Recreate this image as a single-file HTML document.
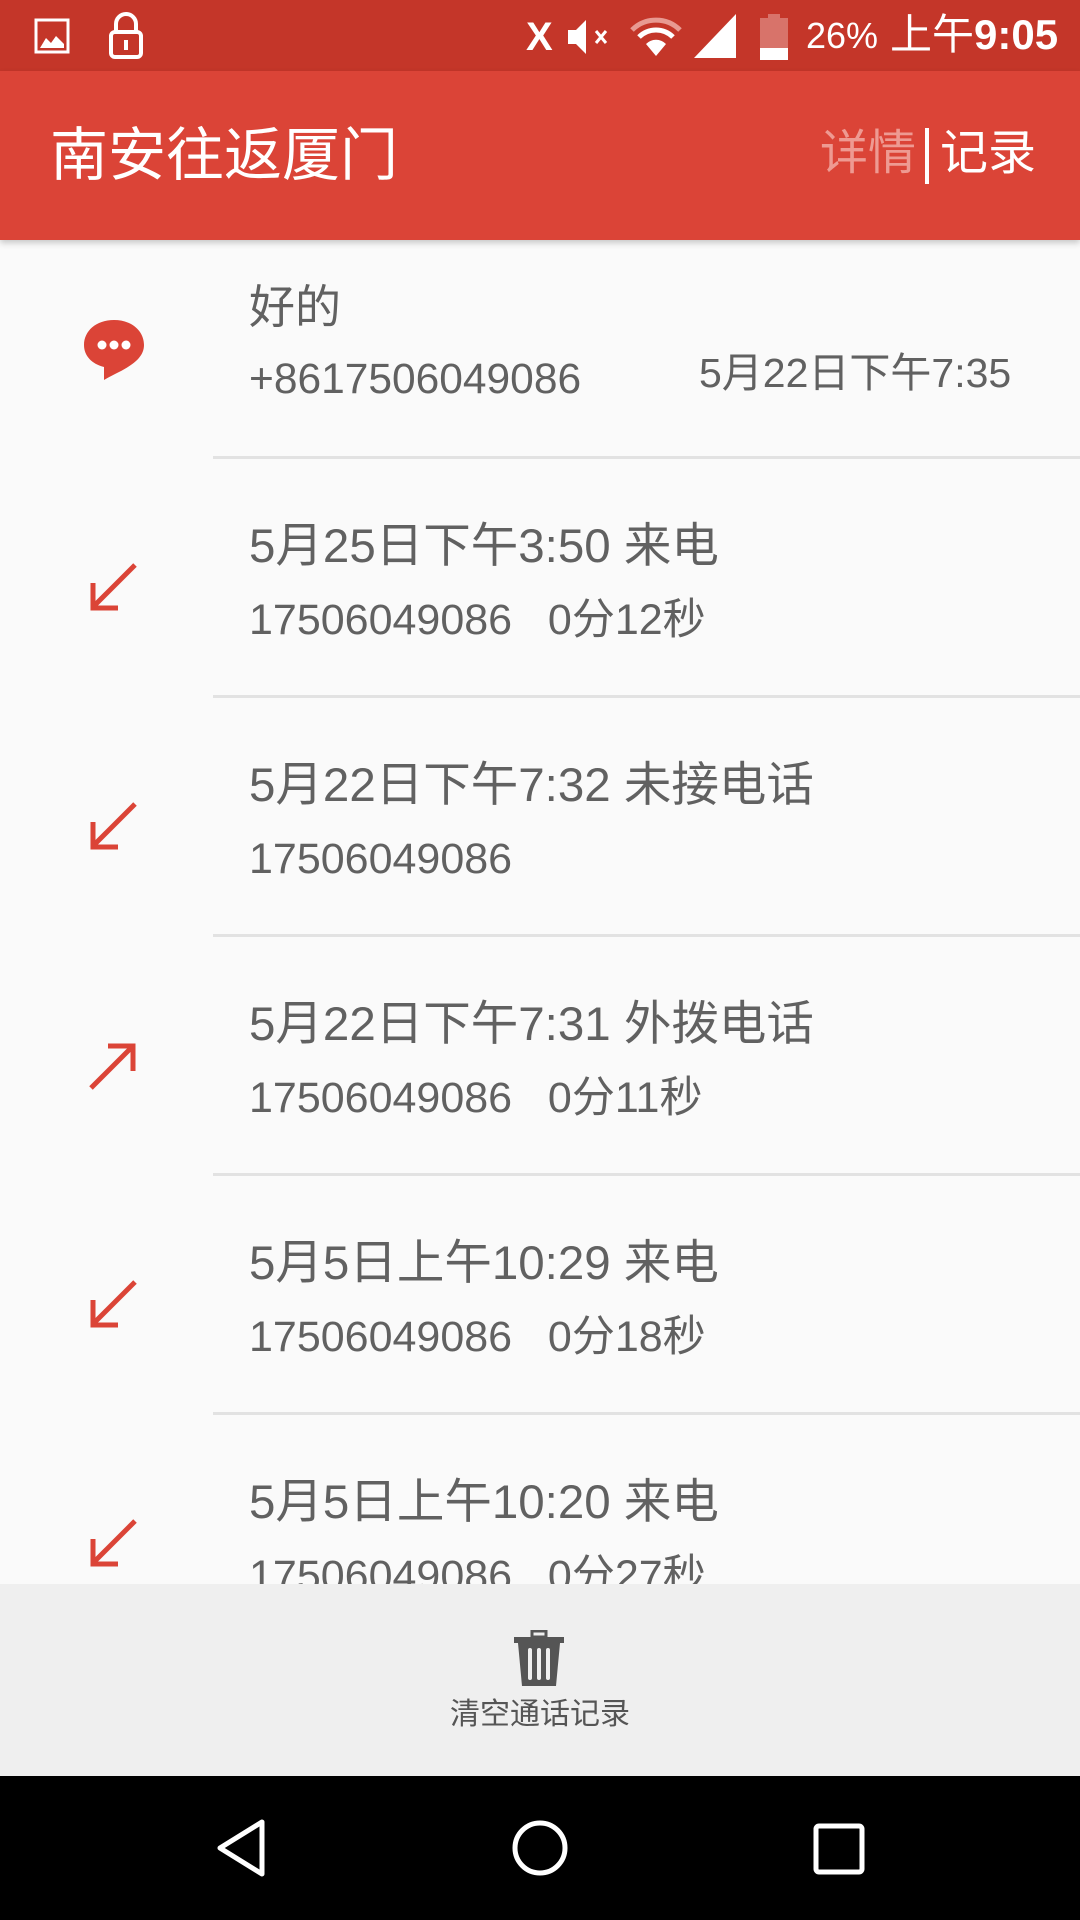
<!DOCTYPE html>
<html><head><meta charset="utf-8"><style>
*{margin:0;padding:0;box-sizing:border-box}
body{width:1080px;height:1920px;overflow:hidden;background:#fafafa;font-family:"Liberation Sans","Noto Sans CJK SC",sans-serif;position:relative}
.abs{position:absolute}
.t{position:absolute;white-space:nowrap;line-height:1;color:#616161}
.div{position:absolute;left:213px;right:0;height:3px;background:#e2e2e2}
.h{font-size:47.5px}
.s{font-size:43px}
</style></head><body>
<div class="abs" style="left:0;top:0;width:1080px;height:71px;background:#c43629"></div>
<svg class="abs" style="left:34px;top:18px" width="40" height="36" viewBox="0 0 40 36"><rect x="2" y="2" width="32" height="32" fill="none" stroke="#fff" stroke-width="3"/><path d="M6 30 L12 20 L17 25 L22 18 L30 26 L30 30 Z" fill="#fff"/></svg>
<svg class="abs" style="left:106px;top:12px" width="40" height="48" viewBox="0 0 40 48"><path d="M10 20 V12 a10 10 0 0 1 20 0 V20" fill="none" stroke="#fff" stroke-width="4"/><rect x="5" y="20" width="30" height="25" rx="4" fill="none" stroke="#fff" stroke-width="4"/><rect x="18" y="28" width="4" height="10" fill="#fff"/></svg>
<div class="t" style="left:526px;top:17px;color:#fff;font-size:40px;font-weight:bold">X</div>
<svg class="abs" style="left:566px;top:16px" width="50" height="42" viewBox="0 0 50 42"><path d="M2 14 H10 L20 4 V38 L10 28 H2 Z" fill="#fff"/><path d="M30 15 L40 27 M40 15 L30 27" stroke="#fff" stroke-width="3"/></svg>
<svg class="abs" style="left:630px;top:16px" width="52" height="42" viewBox="0 0 52 42"><path d="M2 14 A34 34 0 0 1 50 14" fill="none" stroke="#e89a92" stroke-width="5"/><path d="M9 21 A24 24 0 0 1 43 21" fill="none" stroke="#fff" stroke-width="5"/><path d="M16 28 A14 14 0 0 1 36 28 L26 40 Z" fill="#fff"/></svg>
<svg class="abs" style="left:694px;top:14px" width="44" height="44" viewBox="0 0 44 44"><path d="M42 0 V44 H0 Z" fill="#fff"/></svg>
<svg class="abs" style="left:760px;top:14px" width="28" height="46" viewBox="0 0 28 46"><rect x="8" y="0" width="12" height="4" fill="#d8736a"/><rect x="0" y="4" width="28" height="42" fill="#d8736a"/><rect x="0" y="34" width="28" height="12" fill="#fff"/></svg>
<div class="t" style="left:806px;top:18px;color:#fff;font-size:36px">26%</div>
<div class="t" style="left:890px;top:14px;color:#fff;font-size:42px">上午<b>9:05</b></div>
<div class="abs" style="left:0;top:71px;width:1080px;height:169px;background:#db4437;box-shadow:0 3px 6px rgba(0,0,0,.2)"></div>
<div class="t" style="left:50px;top:127px;color:#fff;font-size:58px">南安往返厦门</div>
<div class="t" style="left:820px;top:130px;color:#ee9a92;font-size:48px">详情</div>
<div class="abs" style="left:925px;top:128px;width:4px;height:56px;background:#fff"></div>
<div class="t" style="left:940px;top:130px;color:#fff;font-size:48px">记录</div>
<svg class="abs" style="left:82px;top:318px" width="64" height="64" viewBox="0 0 64 64"><path d="M32 2 C14 2 2 13 2 27 C2 38 10 46 22 49 L22 62 C34 54 62 46 62 27 C62 13 50 2 32 2 Z" fill="#db4437"/><circle cx="20" cy="27" r="4.5" fill="#fff"/><circle cx="32" cy="27" r="4.5" fill="#fff"/><circle cx="44" cy="27" r="4.5" fill="#fff"/></svg>
<div class="t" style="left:249px;top:284px;font-size:46px">好的</div>
<div class="t" style="left:249px;top:359px;font-size:42.5px">+8617506049086</div>
<div class="t" style="left:699px;top:353px;font-size:41px">5月22日下午7:35</div>
<div class="div" style="top:456px"></div>
<svg width="0" height="0" style="position:absolute"><defs>
<g id="in"><path d="M47 2 L7 42" stroke="#db4437" stroke-width="5"/><path d="M5 20 V45 H30" fill="none" stroke="#db4437" stroke-width="5"/></g>
<g id="out"><path d="M3 47 L43 7" stroke="#db4437" stroke-width="5"/><path d="M20 5 H45 V30" fill="none" stroke="#db4437" stroke-width="5"/></g>
</defs></svg>

<svg class="abs" style="left:88px;top:563px" width="50" height="50"><use href="#in"/></svg>
<div class="t h" style="left:249px;top:523px">5月25日下午3:50 来电</div>
<div class="t s" style="left:249px;top:599px">17506049086&nbsp;&nbsp; 0分12秒</div>
<div class="div" style="top:695px"></div>

<svg class="abs" style="left:88px;top:802px" width="50" height="50"><use href="#in"/></svg>
<div class="t h" style="left:249px;top:762px">5月22日下午7:32 未接电话</div>
<div class="t s" style="left:249px;top:838px">17506049086</div>
<div class="div" style="top:934px"></div>

<svg class="abs" style="left:88px;top:1041px" width="50" height="50"><use href="#out"/></svg>
<div class="t h" style="left:249px;top:1001px">5月22日下午7:31 外拨电话</div>
<div class="t s" style="left:249px;top:1077px">17506049086&nbsp;&nbsp; 0分11秒</div>
<div class="div" style="top:1173px"></div>

<svg class="abs" style="left:88px;top:1280px" width="50" height="50"><use href="#in"/></svg>
<div class="t h" style="left:249px;top:1240px">5月5日上午10:29 来电</div>
<div class="t s" style="left:249px;top:1316px">17506049086&nbsp;&nbsp; 0分18秒</div>
<div class="div" style="top:1412px"></div>

<svg class="abs" style="left:88px;top:1519px" width="50" height="50"><use href="#in"/></svg>
<div class="t h" style="left:249px;top:1479px">5月5日上午10:20 来电</div>
<div class="t s" style="left:249px;top:1555px">17506049086&nbsp;&nbsp; 0分27秒</div>
<div class="abs" style="left:0;top:1584px;width:1080px;height:192px;background:#efefef"></div>
<svg class="abs" style="left:512px;top:1630px" width="54" height="58" viewBox="0 0 54 58"><rect x="20" y="1" width="14" height="6" fill="none" stroke="#555" stroke-width="3"/><rect x="2" y="7" width="50" height="6" fill="#555"/><path d="M6 13 H48 L44 56 H10 Z" fill="#555"/><rect x="16" y="18" width="4" height="32" rx="2" fill="#efefef"/><rect x="25" y="18" width="4" height="32" rx="2" fill="#efefef"/><rect x="34" y="18" width="4" height="32" rx="2" fill="#efefef"/></svg>
<div class="t" style="left:450px;top:1700px;font-size:30px;color:#555">清空通话记录</div>
<div class="abs" style="left:0;top:1776px;width:1080px;height:144px;background:#000"></div>
<svg class="abs" style="left:210px;top:1818px" width="60" height="60" viewBox="0 0 60 60"><path d="M52 4 V56 L10 30 Z" fill="none" stroke="#fff" stroke-width="5" stroke-linejoin="round"/></svg>
<svg class="abs" style="left:510px;top:1818px" width="60" height="60" viewBox="0 0 60 60"><circle cx="30" cy="30" r="25" fill="none" stroke="#fff" stroke-width="5"/></svg>
<svg class="abs" style="left:812px;top:1822px" width="56" height="54" viewBox="0 0 56 54"><rect x="4" y="4" width="46" height="46" rx="3" fill="none" stroke="#fff" stroke-width="5"/></svg>
</body></html>
